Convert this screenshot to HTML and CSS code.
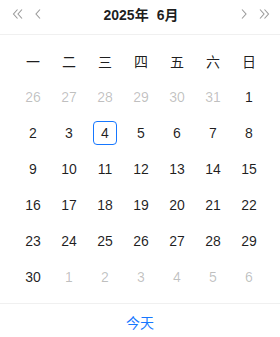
FILE: index.html
```html
<!DOCTYPE html>
<html lang="zh-CN">
<head>
    <meta charset="UTF-8">
    <title>日期选择</title>
    <link rel="stylesheet" href="styles.css">
</head>
<body>
    <div class="panel">
        <div class="header">
            <div class="nav">
                <button class="nav-btn" title="上一年">
                    <svg width="12" height="12" viewBox="0 0 12 12"><path d="M5.5 1.5 1.5 6l4 4.5M10 1.5 6 6l4 4.5" fill="none" stroke="currentColor" stroke-width="1.1"/></svg>
                </button>
                <button class="nav-btn" title="上个月">
                    <svg width="12" height="12" viewBox="0 0 12 12"><path d="M8 1.5 4 6l4 4.5" fill="none" stroke="currentColor" stroke-width="1.1"/></svg>
                </button>
            </div>
            <div class="title">
                <span>2025年</span>
                <span>6月</span>
            </div>
            <div class="nav">
                <button class="nav-btn" title="下个月">
                    <svg width="12" height="12" viewBox="0 0 12 12"><path d="M4 1.5 8 6l-4 4.5" fill="none" stroke="currentColor" stroke-width="1.1"/></svg>
                </button>
                <button class="nav-btn" title="下一年">
                    <svg width="12" height="12" viewBox="0 0 12 12"><path d="M2 1.5 6 6l-4 4.5M6.5 1.5l4 4.5-4 4.5" fill="none" stroke="currentColor" stroke-width="1.1"/></svg>
                </button>
            </div>
        </div>

        <div class="body">
            <div class="grid" id="grid">
                <div class="weekday">一</div>
                <div class="weekday">二</div>
                <div class="weekday">三</div>
                <div class="weekday">四</div>
                <div class="weekday">五</div>
                <div class="weekday">六</div>
                <div class="weekday">日</div>
            </div>
        </div>

        <div class="footer">
            <a class="today-link" href="#">今天</a>
        </div>
    </div>

    <script>
        // June 2025 starts on a Sunday, so show the tail of May first
        const grid = document.getElementById('grid');
        const cells = [];

        for (let d = 26; d <= 31; d++) cells.push({ day: d, outside: true });
        for (let d = 1; d <= 30; d++) cells.push({ day: d, outside: false });
        for (let d = 1; cells.length < 42; d++) cells.push({ day: d, outside: true });

        cells.forEach(cell => {
            const div = document.createElement('div');
            div.className = 'cell' + (cell.outside ? ' cell-outside' : '');
            const inner = document.createElement('span');
            inner.className = 'cell-inner';
            if (!cell.outside && cell.day === 4) inner.classList.add('cell-today');
            inner.textContent = cell.day;
            div.appendChild(inner);
            grid.appendChild(div);
        });
    </script>
</body>
</html>
```

FILE: styles.css
```css
body {
    margin: 0;
    background-color: #fff;
    font-family: "Liberation Sans", "Noto Sans CJK SC", sans-serif;
    font-size: 14px;
    color: rgba(0, 0, 0, 0.88);
}

.panel {
    width: 280px;
    background-color: #fff;
}

.header {
    display: flex;
    align-items: center;
    justify-content: space-between;
    height: 28px;
    padding: 0 10px 6px 12px;
    border-bottom: 1px solid #f0f0f0;
}

.nav {
    display: flex;
    gap: 8px;
}

.nav-btn {
    width: 12px;
    height: 20px;
    padding: 0;
    border: none;
    background: none;
    color: rgba(0, 0, 0, 0.4);
    display: flex;
    align-items: center;
    justify-content: center;
    cursor: pointer;
}

.title {
    display: flex;
    gap: 8px;
    font-weight: 700;
    font-size: 14px;
    color: rgba(0, 0, 0, 0.88);
}

.body {
    padding: 8px 13px 8px 15px;
}

.grid {
    display: grid;
    grid-template-columns: repeat(7, 36px);
    grid-auto-rows: 36px;
}

.weekday,
.cell {
    display: flex;
    align-items: center;
    justify-content: center;
}

.cell-inner {
    display: flex;
    align-items: center;
    justify-content: center;
    min-width: 24px;
    height: 24px;
    box-sizing: border-box;
    border-radius: 4px;
}

.cell-outside {
    color: rgba(0, 0, 0, 0.25);
}

.cell-today {
    border: 1px solid #1677ff;
}

.footer {
    border-top: 1px solid #f0f0f0;
    text-align: center;
    line-height: 38px;
}

.today-link {
    color: #1677ff;
    text-decoration: none;
}
```
